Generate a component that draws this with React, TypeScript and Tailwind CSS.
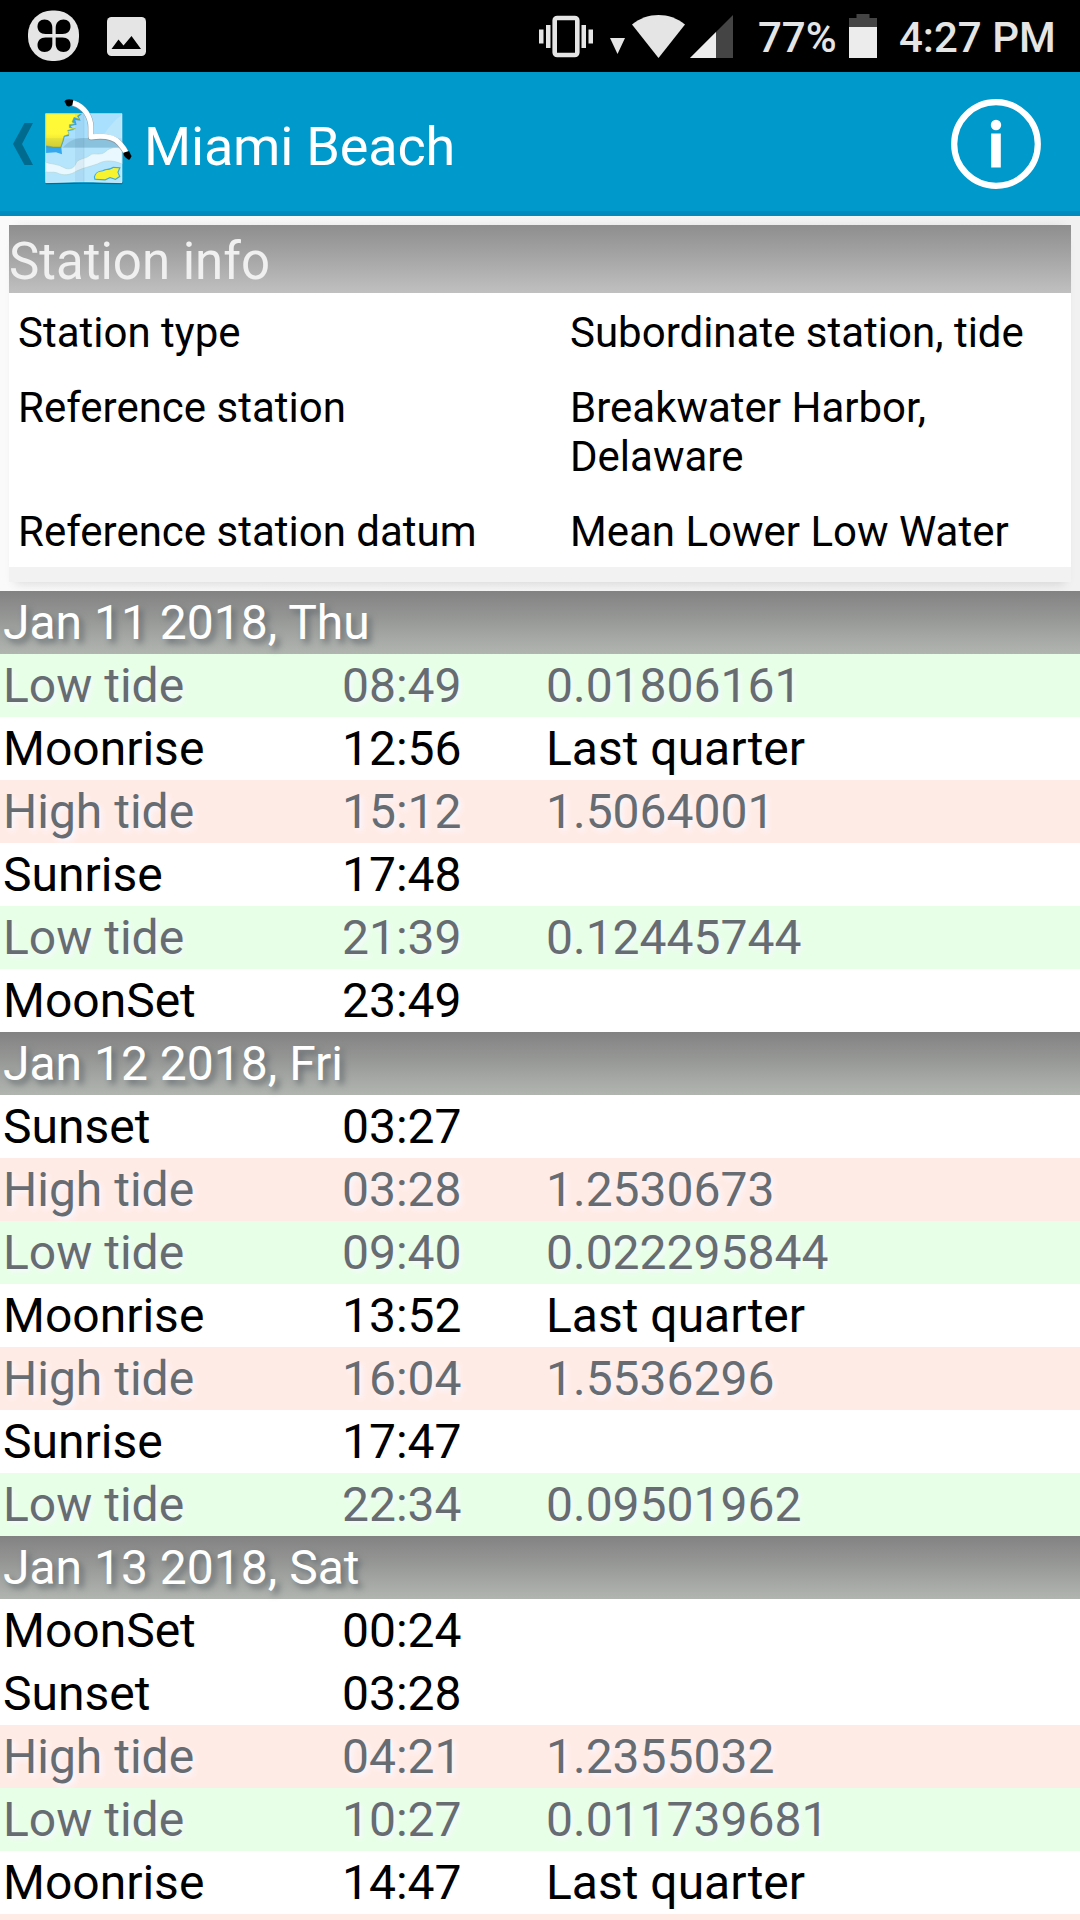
type RowKind = 'low' | 'high' | 'plain';

interface TideEvent {
  kind: RowKind;
  label: string;
  time: string;
  value?: string;
}

interface TideDay {
  date: string;
  events: TideEvent[];
}

const stationInfo = [
  { label: 'Station type', value: 'Subordinate station, tide' },
  { label: 'Reference station', value: 'Breakwater Harbor, Delaware' },
  { label: 'Reference station datum', value: 'Mean Lower Low Water' }
];

const days: TideDay[] = [
  {
    date: 'Jan 11 2018, Thu',
    events: [
      { kind: 'low', label: 'Low tide', time: '08:49', value: '0.01806161' },
      { kind: 'plain', label: 'Moonrise', time: '12:56', value: 'Last quarter' },
      { kind: 'high', label: 'High tide', time: '15:12', value: '1.5064001' },
      { kind: 'plain', label: 'Sunrise', time: '17:48' },
      { kind: 'low', label: 'Low tide', time: '21:39', value: '0.12445744' },
      { kind: 'plain', label: 'MoonSet', time: '23:49' }
    ]
  },
  {
    date: 'Jan 12 2018, Fri',
    events: [
      { kind: 'plain', label: 'Sunset', time: '03:27' },
      { kind: 'high', label: 'High tide', time: '03:28', value: '1.2530673' },
      { kind: 'low', label: 'Low tide', time: '09:40', value: '0.022295844' },
      { kind: 'plain', label: 'Moonrise', time: '13:52', value: 'Last quarter' },
      { kind: 'high', label: 'High tide', time: '16:04', value: '1.5536296' },
      { kind: 'plain', label: 'Sunrise', time: '17:47' },
      { kind: 'low', label: 'Low tide', time: '22:34', value: '0.09501962' }
    ]
  },
  {
    date: 'Jan 13 2018, Sat',
    events: [
      { kind: 'plain', label: 'MoonSet', time: '00:24' },
      { kind: 'plain', label: 'Sunset', time: '03:28' },
      { kind: 'high', label: 'High tide', time: '04:21', value: '1.2355032' },
      { kind: 'low', label: 'Low tide', time: '10:27', value: '0.011739681' },
      { kind: 'plain', label: 'Moonrise', time: '14:47', value: 'Last quarter' },
      { kind: 'high', label: '', time: '' }
    ]
  }
];

const rowStyles: Record<RowKind, string> = {
  low: 'bg-[#e6ffe6] text-[#666c72] [text-shadow:3px_3px_5px_#f8f8ff]',
  high: 'bg-[#ffebe6] text-[#666c72] [text-shadow:3px_3px_5px_#f8f8ff]',
  plain: 'bg-white text-black'
};

function StatusBar() {
  return (
    <div className="flex h-[72px] shrink-0 items-center bg-black pl-7 pr-[25px] text-[42px] font-medium text-[#e5e5e5]">
      <svg className="h-[52px] w-[52px]" viewBox="0 0 52 52">
        <rect x="0" y="0.5" width="51" height="50.5" rx="24" fill="#e5e5e5" />
        <g fill="#000">
          <path d="M24.3 24V17.5C24.3 12.5 21 9.5 16.5 9.5C12 9.5 9.5 12.5 9.5 16.5C9.5 21 12.5 24 17.5 24Z" />
          <path d="M27.7 24V17.5C27.7 12.5 31 9.5 35.5 9.5C40 9.5 42.5 12.5 42.5 16.5C42.5 21 39.5 24 34.5 24Z" />
          <path d="M24.3 27.5V34C24.3 39 21 42 16.5 42C12 42 9.5 39 9.5 35C9.5 30.5 12.5 27.5 17.5 27.5Z" />
          <path d="M27.7 27.5V34C27.7 39 31 42 35.5 42C40 42 42.5 39 42.5 35C42.5 30.5 39.5 27.5 34.5 27.5Z" />
        </g>
      </svg>
      <svg className="ml-[27px] h-[39px] w-[39px]" viewBox="0 0 39 39">
        <rect width="39" height="39" rx="4.5" fill="#e5e5e5" />
        <path d="M4.5 32L11.5 22.5L16.5 28.5L24.5 19L34 32Z" fill="#000" />
      </svg>

      {/* vibrate */}
      <svg className="ml-auto h-[43px] w-[54px]" viewBox="0 0 54 43">
        <rect x="15.7" y="3" width="22.6" height="37" rx="2.5" fill="none" stroke="#e5e5e5" strokeWidth="4.6" />
        <path d="M0 14.5H4.5V28.5H0ZM7 10H11.5V33H7ZM42.5 10H47V33H42.5ZM49.5 14.5H54V28.5H49.5Z" fill="#e5e5e5" />
      </svg>
      <svg className="ml-[17px] mt-[19px] h-[16px] w-[15px]" viewBox="0 0 15 16">
        <path d="M0 0H15L7.5 16Z" fill="#e5e5e5" />
      </svg>
      {/* wifi */}
      <svg className="ml-[7px] h-[43px] w-[53px]" viewBox="0 0 53 43">
        <path d="M26.5 43L0 9.5C8 3 17 0 26.5 0S45 3 53 9.5Z" fill="#e5e5e5" />
      </svg>
      {/* signal */}
      <svg className="ml-[5px] h-[43px] w-[43px]" viewBox="0 0 43 43">
        <path d="M43 0V43H0Z" fill="#444444" />
        <path d="M26 17V43H0Z" fill="#ececec" />
      </svg>
      <span className="ml-[25px] w-[78px] whitespace-nowrap pt-1 leading-none">77%</span>
      {/* battery */}
      <svg className="ml-[13px] h-[44px] w-[28px]" viewBox="0 0 28 44">
        <path d="M7.5 0H20.5V4H28V14H0V4H7.5Z" fill="#444444" />
        <path d="M0 13H28V44H0Z" fill="#ececec" />
      </svg>
      <span className="ml-[22px] w-[156px] whitespace-nowrap pt-1 leading-none">4:27 PM</span>
    </div>
  );
}

function ChartLogo() {
  return (
    <svg className="mb-[6px] ml-[9px] h-[90px] w-[92px]" viewBox="126 288 276 270">
      <defs>
        <linearGradient id="land" x1="0" y1="0" x2="0" y2="1">
          <stop offset="0" stopColor="#fffb38" />
          <stop offset="0.6" stopColor="#fff838" />
          <stop offset="1" stopColor="#e2d62c" />
        </linearGradient>
      </defs>
      <path d="M134 545L250 549L370 545L366 553L250 551L138 553Z" fill="#04506b" opacity="0.6" />
      <path d="M137 341H366V548L250 545L137 548Z" fill="#aae1ff" />
      <path d="M137 341H366V443H137Z" fill="#a9e0fe" />
      <path d="M366 345C340 362 325 385 306 412C330 418 350 420 366 438Z" fill="#b9e6fb" />
      <path d="M188 443C205 425 220 415 250 414L310 413C340 414 352 425 366 443Z" fill="#92cae6" />
      <path d="M137 443H366V548L250 545L137 548Z" fill="#b5e5fd" />
      <path d="M137 487C155 493 175 492 190 502C205 511 222 506 227 492C232 475 255 478 270 466C280 455 300 470 318 454C330 441 352 440 366 446V492C345 482 315 478 292 492C270 500 250 503 230 513C210 526 190 528 170 518C158 515 148 518 137 516Z" fill="#e9f8ff" stroke="#a9cfc9" strokeWidth="1.5" />
      <path d="M137 341H247L236 350L242 362L226 360L230 374L212 378L222 390L204 393L207 408L194 410L190 425L184 442L186 463L168 457L137 459Z" fill="#35a7ec" />
      <path
        d="M137 341H242L232 348L238 358L222 352L216 366L226 371L208 374L208 383L226 386L203 391L207 403L192 408L188 424L182 441H160L137 437Z"
        fill="url(#land)"
        stroke="#87a847"
        strokeWidth="1.5"
      />
      <path
        d="M285 531C288 518 296 515 309 514C320 508 330 512 340 504L357 505L352 517L357 529L346 536L330 531L315 538L286 536Z"
        fill="#f7f331"
        stroke="#3fabd9"
        strokeWidth="7"
      />
      <path
        d="M285 531C288 518 296 515 309 514C320 508 330 512 340 504L357 505L352 517L357 529L346 536L330 531L315 538L286 536Z"
        fill="#f7f331"
      />
      <path d="M137 341H366V548L250 545L137 548Z" fill="none" stroke="#dff5ff" strokeWidth="2" opacity="0.8" />
      <path d="M225 341H252V546H225Z" fill="#4a7f99" opacity="0.09" />
      <path d="M252 341V546" stroke="#6f9fb4" strokeWidth="2" opacity="0.25" />
      <path d="M137 415H366V443H137Z" fill="#3d6b80" opacity="0.09" />

      {/* gull */}
      <g fill="none" strokeLinejoin="round">
        <path d="M210 308C243 314 266 338 272 372C274 388 272 400 273 412C304 408 338 407 358 430C368 441 376 452 381 464" stroke="#8b9aa2" strokeWidth="18" />
        <path d="M210 307C243 313 266 337 272 371C274 387 272 399 273 411C304 407 338 406 358 429C368 440 376 451 381 463" stroke="#fff" strokeWidth="15" />
      </g>
      <path d="M193 305C197 296 210 296 220 300L217 316C211 320 204 320 200 317C197 312 198 309 193 305Z" fill="#000" />
      <path d="M370 458L387 453C391 459 391 464 395 468C391 473 392 478 387 479C378 475 370 467 370 458Z" fill="#000" />
    </svg>
  );
}

function ActionBar() {
  return (
    <header className="flex h-36 shrink-0 items-center border-b-[5px] border-[#008bbf] bg-[#0099cc] pl-[13px] pr-[39px] pt-[5px]">
      <svg className="h-[42px] w-[20px]" viewBox="0 0 20 42">
        <path d="M11.5 0H20L9 21L20 42H11.5L0 21Z" fill="#006b8f" />
      </svg>
      <ChartLogo />
      <h1 className="ml-[10px] pt-[5px] text-[54px] leading-none tracking-[-0.2px] text-white">Miami Beach</h1>
      <svg className="ml-auto h-[90px] w-[90px]" viewBox="0 0 90 90">
        <circle cx="45" cy="45" r="41.8" fill="none" stroke="#fff" strokeWidth="6.2" />
        <circle cx="45" cy="26" r="5.2" fill="#fff" />
        <path d="M40.2 34.5H49.8V68.5H40.2Z" fill="#fff" />
      </svg>
    </header>
  );
}

function StationCard() {
  return (
    <section className="h-[375px] shrink-0 overflow-hidden bg-linear-to-r from-[#fafafa] to-[#f1f1f1] px-[9px] py-[9px]">
      <div className="h-[357px] bg-[#f2f2f2] shadow-[0_-6px_10px_-8px_rgba(0,0,0,0.1),0_8px_10px_-6px_rgba(0,0,0,0.12)]">
        <h2 className="h-[68px] bg-linear-to-b from-[#8e8e8e] to-[#c0c0c0] pt-[7px] text-[51px] leading-[60px] text-[#f0f0f0]">
          Station info
        </h2>
        <dl className="flex flex-col gap-[26px] bg-white pb-[11px] pl-[9px] pt-[15px] text-[42px] leading-[49px] text-black">
          {stationInfo.map(item => (
            <div key={item.label} className="flex">
              <dt className="w-[552px] shrink-0">{item.label}</dt>
              <dd className="w-[470px]">{item.value}</dd>
            </div>
          ))}
        </dl>
      </div>
    </section>
  );
}

function DaySection({ day }: { day: TideDay }) {
  return (
    <section className="text-[48px] leading-[63px]">
      <h3 className="h-[63px] bg-linear-to-b from-[#828282] to-[#b1b5b0] pl-[3px] text-white [text-shadow:4px_4px_6px_#666c72]">
        {day.date}
      </h3>
      {day.events.map((event, index) => (
        <div key={index} className={`flex h-[63px] pl-[3px] ${rowStyles[event.kind]}`}>
          <span className="w-[339px]">{event.label}</span>
          <span className="w-[204px]">{event.time}</span>
          <span>{event.value}</span>
        </div>
      ))}
    </section>
  );
}

export default function App() {
  return (
    <div className="flex h-[1920px] w-[1080px] flex-col overflow-hidden bg-white font-[Roboto,sans-serif]">
      <StatusBar />
      <ActionBar />
      <StationCard />
      <main className="min-h-0 flex-1 overflow-hidden">
        {days.map(day => (
          <DaySection key={day.date} day={day} />
        ))}
      </main>
    </div>
  );
}
